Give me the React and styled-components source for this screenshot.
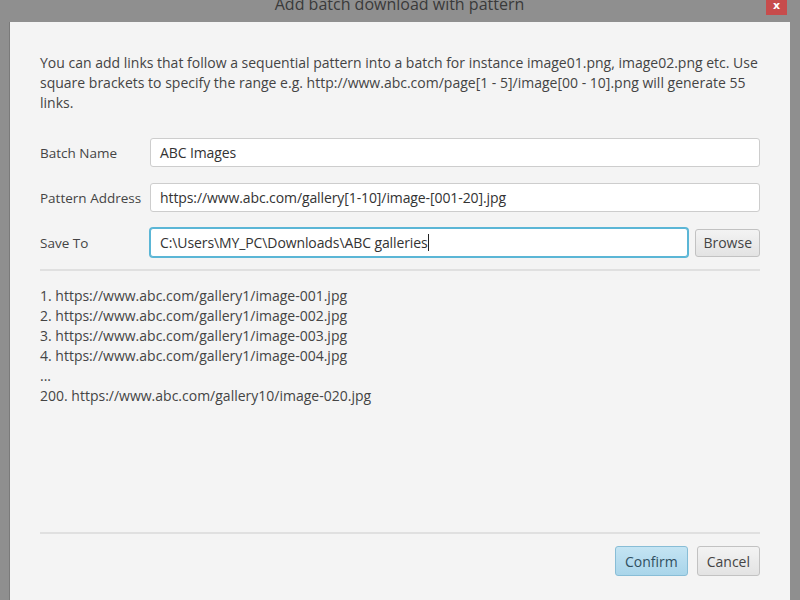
import styled, { createGlobalStyle } from 'styled-components';

const GlobalStyle = createGlobalStyle`
  html, body {
    margin: 0;
    padding: 0;
    width: 800px;
    height: 600px;
    overflow: hidden;
    font-family: 'Open Sans', 'Noto Sans', sans-serif;
  }
`;

const Frame = styled.div`
  width: 800px;
  height: 600px;
  background: #8f8f8f;
  display: flex;
  flex-direction: column;
  box-sizing: border-box;
  padding: 0 10px 0 9px;
`;

const TitleBar = styled.div`
  height: 22px;
  flex-shrink: 0;
  display: flex;
  justify-content: center;
  align-items: flex-start;
  position: relative;
  overflow: hidden;
`;

const Title = styled.div`
  font-size: 16px;
  line-height: 20px;
  margin-top: -6px;
  color: #3a3a3a;
`;

const CloseButton = styled.div`
  position: absolute;
  right: 3px;
  top: 0;
  width: 21px;
  height: 15px;
  background: #c74c4c;
  color: #fff;
  font-size: 11px;
  font-weight: bold;
  line-height: 12px;
  text-align: center;
  font-family: 'DejaVu Sans', sans-serif;
`;

const Panel = styled.div`
  flex: 1;
  background: #f4f4f4;
  border-left: 1px solid #7a7a7a;
  display: flex;
  flex-direction: column;
  padding: 31px 30px 24px 30px;
  color: #444;
  font-size: 14px;
`;

const Intro = styled.p`
  margin: 0 0 25px;
  line-height: 20px;
`;

const Form = styled.div`
  display: flex;
  flex-direction: column;
  gap: 16px;
`;

const Row = styled.div`
  display: flex;
  align-items: center;
  gap: 7px;
`;

const Label = styled.div`
  width: 103px;
  flex-shrink: 0;
  font-size: 13.5px;
`;

const Input = styled.div`
  flex: 1;
  height: 29px;
  box-sizing: border-box;
  background: #fff;
  border: 1px solid ${({ $focused }) => ($focused ? '#5bb6d6' : '#cdcdcd')};
  box-shadow: ${({ $focused }) => ($focused ? '0 0 0 1px #5bb6d6' : 'none')};
  border-radius: 3px;
  padding: 0 9px;
  display: flex;
  align-items: center;
  font-size: 14px;
  color: #333;
  letter-spacing: -0.1px;
  white-space: nowrap;
`;

const Caret = styled.span`
  display: inline-block;
  width: 1px;
  height: 17px;
  background: #222;
`;

const Button = styled.div`
  height: ${({ $h }) => $h || 29}px;
  box-sizing: border-box;
  padding: 0 ${({ $px }) => $px || 9}px;
  display: flex;
  align-items: center;
  border-radius: 3px;
  font-size: 14px;
  color: ${({ $primary }) => ($primary ? '#2f4f5f' : '#444')};
  border: 1px solid ${({ $primary }) => ($primary ? '#88bdd6' : '#c2c2c2')};
  background: ${({ $primary }) =>
    $primary
      ? 'linear-gradient(#c4e4f3, #a9d5ea)'
      : 'linear-gradient(#f3f3f3, #e3e3e3)'};
`;

const Divider = styled.div`
  height: 2px;
  background: #e0e0e0;
  margin: ${({ $m }) => $m};
`;

const LinkList = styled.div`
  line-height: 20px;
`;

const Spacer = styled.div`
  flex: 1;
`;

const Footer = styled.div`
  display: flex;
  justify-content: flex-end;
  gap: 9px;
`;

const links = [
  '1. https://www.abc.com/gallery1/image-001.jpg',
  '2. https://www.abc.com/gallery1/image-002.jpg',
  '3. https://www.abc.com/gallery1/image-003.jpg',
  '4. https://www.abc.com/gallery1/image-004.jpg',
  '...',
  '200. https://www.abc.com/gallery10/image-020.jpg',
];

export default function App() {
  return (
    <>
      <GlobalStyle />
      <Frame>
        <TitleBar>
          <Title>Add batch download with pattern</Title>
          <CloseButton>x</CloseButton>
        </TitleBar>
        <Panel>
          <Intro>
            You can add links that follow a sequential pattern into a batch for instance image01.png, image02.png etc. Use
            <br />
            square brackets to specify the range e.g. http://www.abc.com/page[1 - 5]/image[00 - 10].png will generate 55
            <br />
            links.
          </Intro>
          <Form>
            <Row>
              <Label>Batch Name</Label>
              <Input>ABC Images</Input>
            </Row>
            <Row>
              <Label>Pattern Address</Label>
              <Input>https://www.abc.com/gallery[1-10]/image-[001-20].jpg</Input>
            </Row>
            <Row>
              <Label>Save To</Label>
              <Input $focused>
                C:\Users\MY_PC\Downloads\ABC galleries
                <Caret />
              </Input>
              <Button $h={28} $px={7}>Browse</Button>
            </Row>
          </Form>
          <Divider $m="12px 0 15px" />
          <LinkList>
            {links.map((l) => (
              <div key={l}>{l}</div>
            ))}
          </LinkList>
          <Spacer />
          <Divider $m="0 0 12px" />
          <Footer>
            <Button $primary $h={30}>Confirm</Button>
            <Button $h={30}>Cancel</Button>
          </Footer>
        </Panel>
      </Frame>
    </>
  );
}
